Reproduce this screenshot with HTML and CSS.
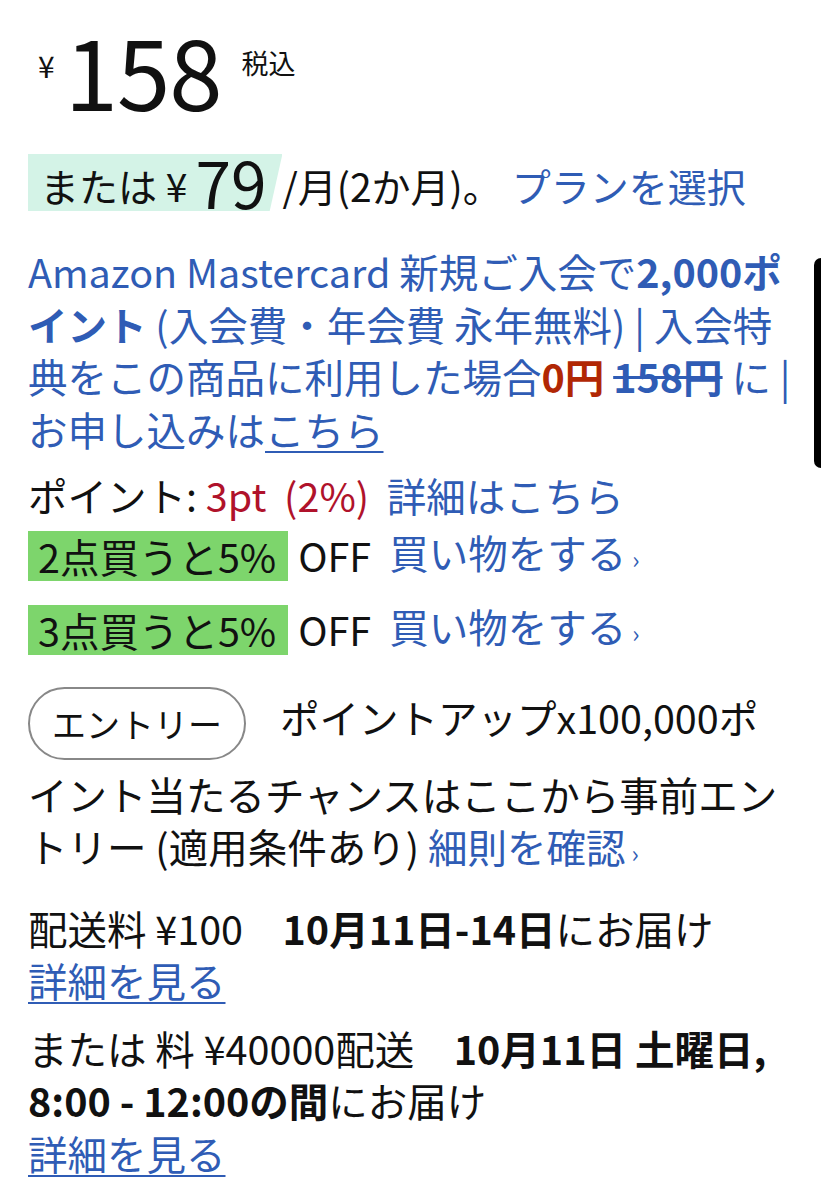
FILE: index.html
```html
<!DOCTYPE html>
<html lang="ja">
<head>
<meta charset="utf-8">
<link rel="stylesheet" href="styles.css">
</head>
<body>
<div class="page">
  <div class="price-row">
    <span class="yen">¥</span><span class="amount">158</span><span class="tax">税込</span>
  </div>
  <div class="plan-row">
    <span class="mint">または ¥<span class="big79">79</span></span><span class="per">/月(2か月)。</span><a class="link plan">プランを選択</a>
  </div>
  <p class="card link">Amazon Mastercard 新規ご入会で<b>2,000ポイント</b> (入会費・年会費 永年無料) | 入会特典をこの商品に利用した場合<b class="zero">0円</b> <b class="strike">158円</b> に | お申し込みは<u>こちら</u></p>
  <p class="points">ポイント: <span class="red">3pt</span>&nbsp; <span class="red">(2%)</span>&nbsp; <a class="link">詳細はこちら</a></p>
  <div class="deal"><span class="green">2点買うと5%</span><span class="off">OFF</span><a class="link">買い物をする<span class="chev">›</span></a></div>
  <div class="deal"><span class="green">3点買うと5%</span><span class="off">OFF</span><a class="link">買い物をする<span class="chev">›</span></a></div>
  <p class="entry"><span class="pill">エントリー</span>ポイントアップx100,000ポイント当たるチャンスはここから事前エントリー (適用条件あり) <a class="link">細則を確認<span class="chev">›</span></a></p>
  <p class="ship">配送料 ¥100　<b>10月11日-14日</b>にお届け<br><a class="link ul">詳細を見る</a></p>
  <p class="ship">または 料 ¥40000配送　<b>10月11日 土曜日, 8:00 - 12:00の間</b>にお届け<br><a class="link ul">詳細を見る</a></p>
</div>
<div class="scrollbar"></div>
</body>
</html>
```
FILE: styles.css
```css
html, body {
  margin: 0;
  padding: 0;
  background: #fff;
}
body {
  font-family: "Noto Sans CJK JP", "Noto Sans", sans-serif;
  color: #111;
  font-size: 39.5px;
  line-height: 52.5px;
}
.page {
  padding: 0 28px;
  width: 767px;
}
p { margin: 0; }
b { font-weight: 700; }
.link { color: #2f5cb5; text-decoration: none; }
.price-row {
  display: flex;
  align-items: flex-start;
  height: 120px;
  padding-top: 22px;
  box-sizing: border-box;
}
.yen { font-size: 30px; line-height: 30px; margin: 28px 10px 0 10px; }
.amount { font-size: 96px; line-height: 96px; letter-spacing: -1px; }
.tax { font-size: 27px; line-height: 30px; margin: 26px 0 0 20px; }
.plan-row {
  display: flex;
  align-items: flex-end;
  margin-top: 34px;
  height: 57px;
}
.mint {
  background: #d4f3e7;
  padding: 0 16px 0 12px;
  height: 57px;
  display: flex;
  align-items: flex-end;
  clip-path: polygon(0 0, 100% 0, 95% 100%, 0 100%);
  line-height: 52px;
  font-size: 39px;
}
.big79 { font-size: 64px; line-height: 60px; margin-left: 8px; }
.per { margin-left: 0; font-size: 39px; line-height: 52px; }
.plan { margin-left: 10px; font-size: 39px; line-height: 52px; }
.card { margin-top: 34px; }
.zero { color: #b12704; }
.strike { text-decoration: line-through; text-decoration-thickness: 3px; }
.card u { text-decoration-thickness: 2px; text-underline-offset: 5px; }
.points { margin-top: 14px; }
.red { color: #b0122b; }
.deal {
  display: flex;
  align-items: center;
  margin-top: 9px;
  height: 50px;
}
.deal + .deal { margin-top: 24px; }
.green {
  background: #7dd56c;
  padding: 0 12px 0 10px;
  height: 50px;
  line-height: 50px;
}
.off { margin: 0 18px 0 10px; }
.chev { font-size: 24px; margin-left: 6px; vertical-align: 0; }
.entry { margin-top: 24px; }
.pill {
  display: inline-block;
  vertical-align: middle;
  border: 2px solid #888;
  border-radius: 40px;
  height: 73px;
  line-height: 69px;
  padding: 0 22px;
  margin: 8px 34px 8px 0;
  font-size: 34px;
  box-sizing: border-box;
}
.ship { margin-top: 22px; }
.ship + .ship { margin-top: 15px; }
.ul { text-decoration: underline; text-decoration-thickness: 2px; text-underline-offset: 5px; }
.scrollbar {
  position: absolute;
  top: 258px;
  right: 0;
  width: 7px;
  height: 210px;
  background: #000;
  border-radius: 7px 0 0 7px;
}
```
